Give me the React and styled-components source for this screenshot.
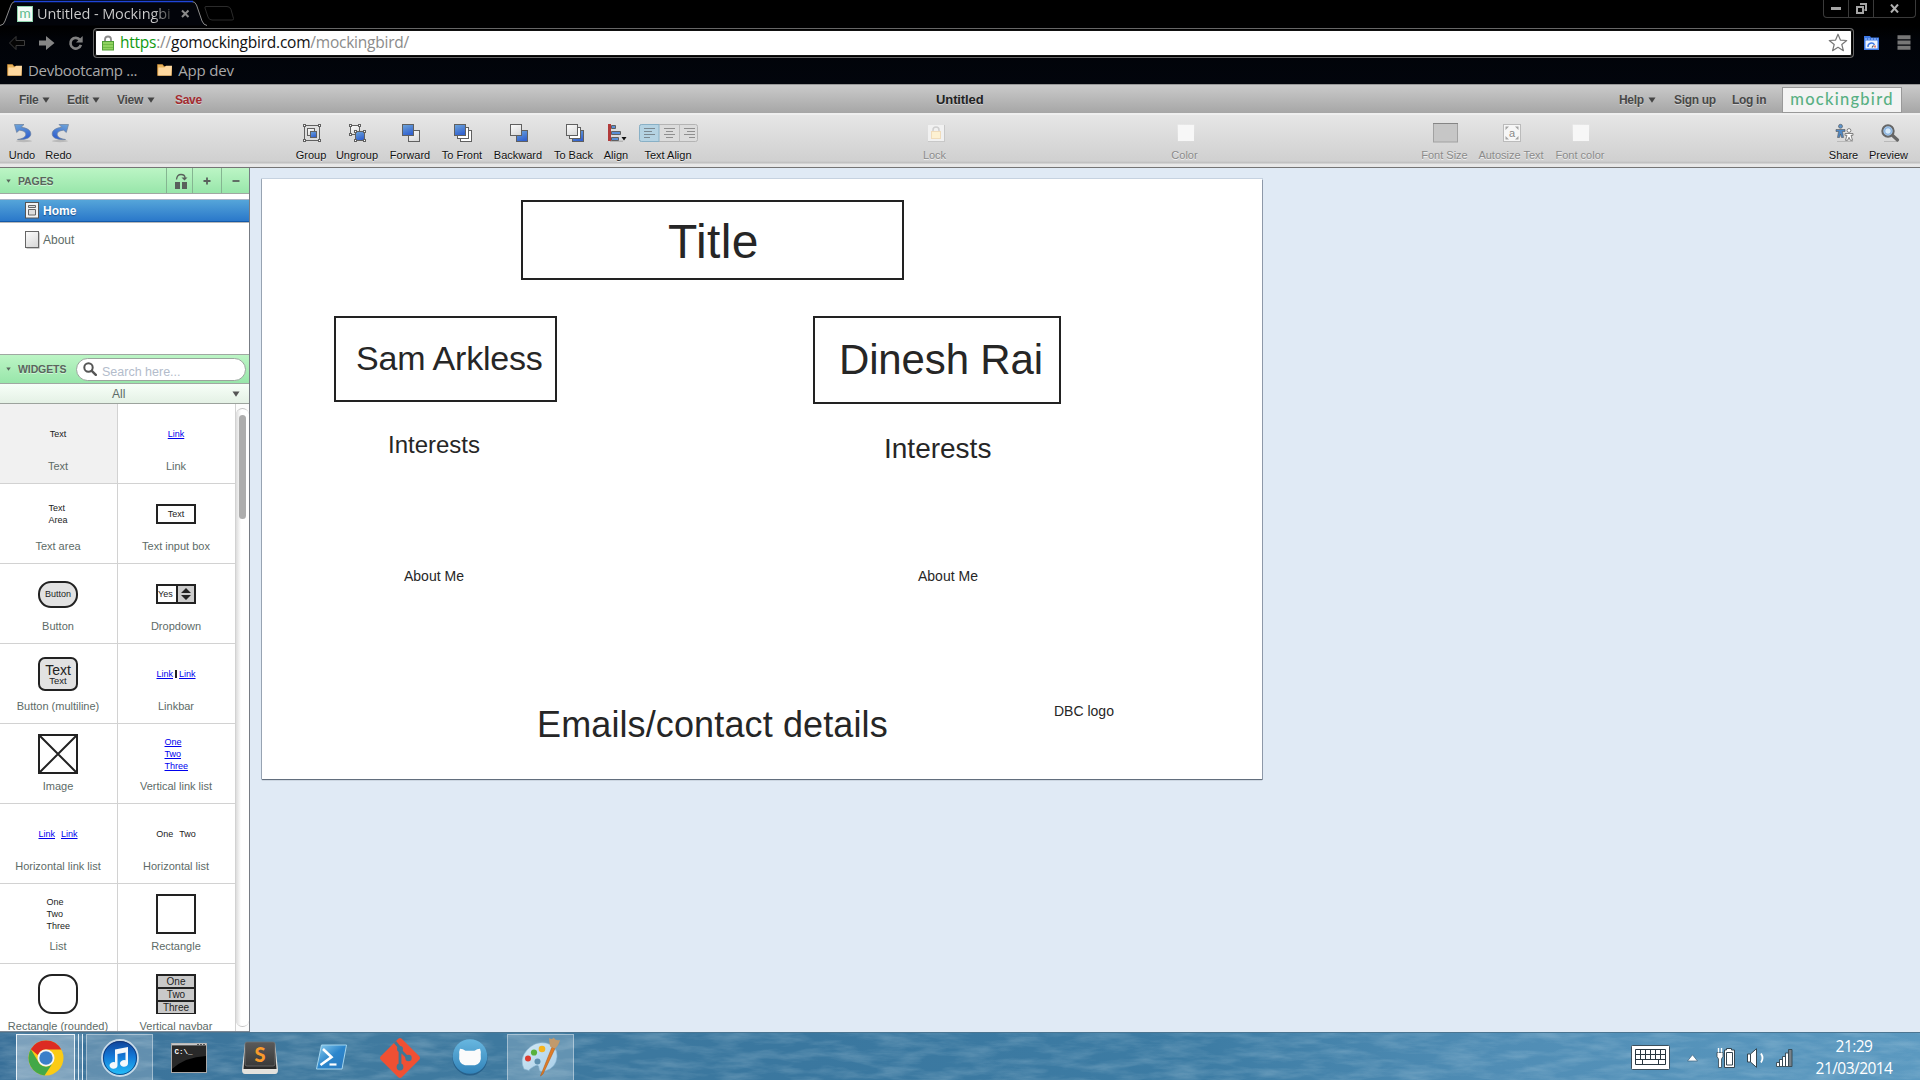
import React from 'react';
import styled, { createGlobalStyle, css } from 'styled-components';

const ARIAL = '"Liberation Sans", Arial, sans-serif';
const SEGOE = '"Open Sans", "Noto Sans", sans-serif';

const GlobalStyle = createGlobalStyle`
  *, *::before, *::after { box-sizing: border-box; }
  body { margin: 0; overflow: hidden; background: #e0eaf5; font-family: ${ARIAL}; }
  svg { display: block; flex: none; }
`;

const Screen = styled.div`
  width: 1920px;
  height: 1080px;
  display: flex;
  flex-direction: column;
  overflow: hidden;
`;

/* ---------- browser window ---------- */

const BrowserChrome = styled.header`
  height: 84px;
  flex: none;
  background: linear-gradient(#000 0, #000 26px, #010308 40px, #02050c 100%);
  font-family: ${SEGOE};
`;

const TabStrip = styled.div`
  height: 28px;
  display: flex;
  align-items: flex-start;
`;

const Tab = styled.div`
  position: relative;
  width: 204px;
  height: 28px;
  padding: 0 14px 0 17px;
  display: flex;
  align-items: center;
  gap: 4px;
`;

const TabOutline = styled.svg`
  position: absolute;
  left: 0;
  top: 0;
`;

const Favicon = styled.span`
  position: relative;
  width: 16px;
  height: 16px;
  background: #f4fbf7;
  border: 1px solid #8ed3ad;
  color: #5fbb8d;
  font: 14px/11px "Lato", sans-serif;
  display: flex;
  justify-content: center;
`;

const TabTitle = styled.span`
  position: relative;
  width: 140px;
  white-space: nowrap;
  font-size: 14.5px;
  line-height: 20px;
  letter-spacing: -0.1px;
  background: linear-gradient(90deg, #cfcfcf 116px, #222 137px);
  background-clip: text;
  color: transparent;
`;

const TabClose = styled.svg`
  position: relative;
`;

const WindowButtons = styled.div`
  margin-left: auto;
  margin-right: 4px;
  height: 18px;
  display: flex;
  border: 1px solid #3a3a3a;
  border-top: 0;
  border-radius: 0 0 4px 4px;
`;

const WindowButton = styled.div`
  width: ${(p) => p.$w}px;
  padding-bottom: 1px;
  display: flex;
  align-items: center;
  justify-content: center;
  & + & { border-left: 1px solid #3a3a3a; }
`;

const NavRow = styled.div`
  height: 29px;
  display: flex;
  align-items: center;
  padding: 0 8px;
`;

const NavIcons = styled.div`
  width: 86px;
  display: flex;
  align-items: center;
  gap: 12px;
`;

const Omnibox = styled.div`
  width: 1759px;
  height: 28px;
  padding: 0 4px 0 7px;
  display: flex;
  align-items: center;
  background: #fff;
  border: 1px solid #000;
  border-radius: 3px;
  box-shadow: inset 0 0 0 1px #111, 0 0 0 1px #666;
  background-clip: padding-box;
`;

const Url = styled.div`
  flex: 1;
  margin-left: 6px;
  padding-bottom: 1px;
  font-size: 15.5px;
  line-height: 22px;
  letter-spacing: -0.23px;
  color: #8b8b8b;
`;

const Scheme = styled.span`color: #119a11;`;
const Host = styled.span`color: #111;`;

const Extensions = styled.div`
  display: flex;
  align-items: center;
  margin-left: 11px;
  gap: 18px;
`;

const Bookmarks = styled.div`
  height: 26px;
  padding: 0 7px;
  display: flex;
  align-items: center;
  gap: 20px;
`;

const Bookmark = styled.div`
  display: flex;
  align-items: center;
  gap: 5px;
  color: #a9a9a9;
  font-size: 15px;
  line-height: 20px;
  letter-spacing: ${(p) => p.$ls}px;
`;

/* ---------- menu bar ---------- */

const MenuBar = styled.nav`
  height: 29px;
  flex: none;
  display: flex;
  align-items: center;
  padding: 1px 18px 0 19px;
  border-top: 1px solid #979797;
  background: linear-gradient(#cacaca, #a6a6a6);
  font-size: 12px;
  font-weight: bold;
  letter-spacing: -0.3px;
  color: #484848;
  text-shadow: 0 1px 0 rgba(255, 255, 255, 0.45);
`;

const MenuItem = styled.div`
  width: ${(p) => p.$w}px;
  display: flex;
  align-items: center;
  gap: 4px;
  white-space: nowrap;
  ${(p) => p.$alert && css`color: #a32b30;`}
`;

const DocTitle = styled.div`
  flex: 1;
  font-size: 13px;
  letter-spacing: -0.1px;
  color: #222;
  padding-left: 721px;
`;

const Brand = styled.div`
  width: 120px;
  height: 26px;
  background: #f3f3f3;
  border: 1px solid #999;
  color: #58b083;
  font: 500 16.5px/22px "Lato", sans-serif;
  letter-spacing: 1.25px;
  text-align: center;
  text-shadow: none;
`;

/* ---------- tool bar ---------- */

const ToolBar = styled.div`
  height: 55px;
  flex: none;
  display: flex;
  padding: 10px 5px 0 4px;
  border-top: 2px solid #efefef;
  border-bottom: 1px solid #757575;
  background: linear-gradient(#e6e6e6, #d0d0d0 46px, #bdbdbd 48px, #e9e9e9 49px, #e6e6e6);
`;

const ToolGroup = styled.div`
  display: flex;
  margin-left: ${(p) => p.$gap || 0}px;
`;

const Tool = styled.div`
  width: ${(p) => p.$w}px;
  display: flex;
  flex-direction: column;
  align-items: center;
  font-size: 11px;
  line-height: 12px;
  color: #111;
  white-space: nowrap;
  text-shadow: 0 1px 0 rgba(255, 255, 255, 0.7);
  ${(p) => p.$off && css`color: #8a8a8a;`}
`;

const ToolArt = styled.div`
  height: 24px;
  display: flex;
  align-items: flex-start;
  padding-left: 2px;
  margin-top: -2px;
  margin-bottom: 2px;
`;

/* ---------- workspace ---------- */

const Workspace = styled.main`
  height: 864px;
  flex: none;
  display: flex;
`;

const SideBar = styled.aside`
  width: 250px;
  flex: none;
  display: flex;
  flex-direction: column;
  background: #fff;
  border-right: 1px solid #777c84;
`;

const PanelHead = styled.div`
  height: ${(p) => p.$h}px;
  flex: none;
  display: flex;
  align-items: center;
  border-bottom: 1px solid #a0a8a2;
  background: linear-gradient(#bcf5c5, #98e6aa);
  color: #59655c;
  font-size: 10.5px;
  font-weight: bold;
  padding-left: 6px;
  text-shadow: 0 1px 0 rgba(255, 255, 255, 0.5);
  ${(p) => p.$line && css`border-top: 1px solid #a0a8a2;`}
`;

const PanelTitle = styled.span`
  flex: 1;
  margin-left: 7px;
  letter-spacing: -0.1px;
`;

const HeadButton = styled.div`
  width: ${(p) => p.$w}px;
  height: 100%;
  padding-left: ${(p) => p.$pl || 0}px;
  display: flex;
  align-items: center;
  justify-content: center;
  border-left: 1px solid #85b591;
`;

const PageList = styled.div`
  height: 160px;
  flex: none;
  padding-top: 5px;
`;

const PageItem = styled.div`
  height: ${(p) => (p.$on ? 23 : 36)}px;
  padding-left: 25px;
  display: flex;
  align-items: center;
  gap: 3px;
  font-size: 12px;
  color: #5d6b67;
  ${(p) => p.$on && css`
    color: #fff;
    font-weight: bold;
    border-top: 1px solid #a8b4c8;
    border-bottom: 1px solid #1259a8;
    box-shadow: 0 1px 0 #b9b9b9;
    background: linear-gradient(#55a5d9, #2a78ca);
    text-shadow: 0 1px 1px rgba(0, 30, 80, 0.5);
  `}
`;

const Search = styled.div`
  width: 170px;
  height: 23px;
  margin-right: 3px;
  padding-left: 6px;
  display: flex;
  align-items: center;
  gap: 5px;
  background: #fff;
  border: 1px solid #9aa59d;
  border-radius: 12px;
  color: #b3bccb;
  font-weight: normal;
  font-size: 12.5px;
  text-shadow: none;
`;

const SearchHint = styled.span`padding-top: 5px;`;

const Filter = styled.div`
  height: 20px;
  flex: none;
  display: flex;
  align-items: center;
  padding: 1px 9px 0 112px;
  justify-content: space-between;
  font-size: 12px;
  color: #5d6b67;
  background: linear-gradient(#f7fff8, #e4f1e5);
  border-bottom: 1px solid #9ca39d;
`;

const WidgetArea = styled.div`
  height: 628px;
  flex: none;
  display: flex;
  overflow: hidden;
  border-bottom: 1px solid #7d8894;
`;

const WidgetGrid = styled.div`
  width: 236px;
  flex: none;
  display: grid;
  grid-template-columns: 118px 118px;
  grid-auto-rows: 80px;
`;

const Cell = styled.div`
  display: flex;
  flex-direction: column;
  padding-right: 1px;
  border-right: 1px solid #d2d2d2;
  border-bottom: 1px solid #d2d2d2;
  background: ${(p) => (p.$on ? '#f1f1f1' : '#fff')};
`;

const CellArt = styled.div`
  height: 55px;
  padding-top: 5px;
  display: flex;
  align-items: center;
  justify-content: center;
  font-size: 9px;
  line-height: 12px;
  color: #222;
`;

const CellLabel = styled.div`
  font-size: 11px;
  line-height: 14px;
  text-align: center;
  color: #5d6b67;
  white-space: nowrap;
`;

const MiniLink = styled.span`
  color: #0000ee;
  text-decoration: underline;
`;

const MiniColumn = styled.div`
  display: flex;
  flex-direction: column;
  width: ${(p) => p.$w || 19}px;
  white-space: nowrap;
`;

const MiniRow = styled.div`
  display: flex;
  gap: ${(p) => p.$gap}px;
`;

const MiniSep = styled.i`
  width: 2px;
  height: 8px;
  margin-top: 2px;
  background: #222;
`;

const MiniBox = styled.div`
  width: 40px;
  height: ${(p) => p.$h}px;
  display: flex;
  flex-direction: column;
  align-items: center;
  justify-content: center;
  border: 2px solid #222;
  border-radius: ${(p) => p.$r || 0}px;
  background: ${(p) => p.$bg || '#fff'};
`;

const BigLine = styled.span`font-size: 14px; line-height: 13px;`;
const SmallLine = styled.span`font-size: 9.5px; line-height: 8px;`;

const MiniSelect = styled.div`
  width: 40px;
  height: 20px;
  display: flex;
  border: 2px solid #222;
  line-height: 16px;
`;
const MiniValue = styled.div`width: 18px;`;
const MiniSpin = styled.div`
  flex: 1;
  display: flex;
  align-items: center;
  justify-content: center;
  background: #ccc;
  border-left: 2px solid #222;
`;

const MiniNav = styled.div`
  width: 40px;
  height: 40px;
  display: grid;
  grid-template-rows: repeat(3, 1fr);
  gap: 2px;
  padding: 2px;
  background: #222;
  font-size: 10px;
  line-height: 11px;
  text-align: center;
`;
const MiniNavItem = styled.div`background: #c9c9c9; height: 11px;`;

const Scroller = styled.div`
  flex: 1;
  padding: 4px 0 4px;
  display: flex;
  background: #fcfcfc;
`;
const ScrollTrack = styled.div`
  flex: 1;
  border: 1px solid #c3c3c3;
  border-left: 0;
  border-right: 0;
  border-radius: 7px;
  background: linear-gradient(90deg, #dcdcdc, #fff 5px);
  padding: 6px 3px;
`;
const ScrollThumb = styled.div`
  width: 7px;
  height: 104px;
  border-radius: 4px;
  background: #adadad;
`;

const Stage = styled.section`
  flex: 1;
  background: #e0eaf5;
  padding: 11px 0 0 12px;
`;

const Sheet = styled.div`
  position: relative;
  width: 1000px;
  height: 600px;
  background: #fff;
  box-shadow: 0 0 0 1px rgba(95, 115, 140, 0.2), -1px 0 0 rgba(95, 105, 120, 0.35), 1px 1px 0 rgba(90, 100, 115, 0.45), 0 1px 1px #6b7580;
`;

/* x is the left edge and y the baseline, both in sheet units */
const SheetText = styled.div`
  position: absolute;
  left: ${(p) => p.$x}px;
  top: ${(p) => Math.round(p.$y - p.$size * 0.8465)}px;
  font-size: ${(p) => p.$size}px;
  line-height: 1;
  letter-spacing: ${(p) => p.$ls || 0}px;
  white-space: nowrap;
  color: #262626;
`;

const SheetBox = styled.div`
  position: absolute;
  left: ${(p) => p.$x}px;
  top: ${(p) => p.$y}px;
  width: ${(p) => p.$w}px;
  height: ${(p) => p.$h}px;
  border: 2px solid #222;
`;

/* ---------- task bar ---------- */

const TaskBar = styled.footer`
  position: relative;
  height: 49px;
  flex: none;
  display: flex;
  align-items: stretch;
  padding: 1px 0 0 16px;
  border-top: 1px solid #4b7591;
  background: linear-gradient(90deg, #386f98 0, #407a9f 350px, #3a779f 800px, #3d7ca4 1200px, #508db5 1500px, #5b99c0 1920px);
`;

const Water = styled.svg`
  position: absolute;
  inset: 0;
  opacity: 0.2;
`;

const Task = styled.div`
  position: relative;
  width: ${(p) => p.$w}px;
  margin-right: ${(p) => p.$mr || 0}px;
  display: flex;
  align-items: center;
  justify-content: center;
  ${(p) => p.$open && css`
    border: 1px solid ${p.$front ? '#e9f2f8' : 'rgba(255,255,255,0.4)'};
    background: rgba(255, 255, 255, ${p.$front ? 0.34 : 0.2});
  `}
`;

const Stack = styled.div`
  position: relative;
  width: 4px;
  margin-right: ${(p) => p.$mr || 0}px;
  border-right: 1px solid #e3eef6;
  background: rgba(255, 255, 255, 0.1);
`;

const Tray = styled.div`
  position: relative;
  margin-left: auto;
  display: flex;
  align-items: center;
  padding-right: 27px;
`;

const TrayIcon = styled.div`
  margin-right: ${(p) => p.$mr}px;
`;

const Clock = styled.div`
  width: 78px;
  text-align: center;
  color: #fff;
  font: 400 15.5px/22px ${SEGOE};
  letter-spacing: -0.55px;
  white-space: nowrap;
  padding-bottom: 1px;
`;

/* ---------- icons ---------- */

const Caret = ({ w = 8, color = '#444' }) => (
  <svg width={w} height="6" viewBox="0 0 8 6"><path d="M0.5 0.5h7L4 5.8z" fill={color} /></svg>
);

const Folder = () => (
  <svg width="16" height="14" viewBox="0 0 16 14">
    <path d="M.5 12.5V1.5h5l1.5 2h7.5v9z" fill="#e9b45c" stroke="#c98a35" strokeWidth=".6" />
    <path d="M1.2 12.4L1.5 4.5h6L9 2.8h6l-.7 9.6z" fill="#ffd9a0" />
  </svg>
);

const DefsSvg = styled.svg`
  position: absolute;
`;

const Defs = () => (
  <DefsSvg width="0" height="0">
    <defs>
      <linearGradient id="blue" x1="0" y1="0" x2="0.4" y2="1">
        <stop offset="0" stopColor="#6fa6da" /><stop offset="1" stopColor="#3363cf" />
      </linearGradient>
      <linearGradient id="pale" x1="0" y1="0" x2="0.5" y2="1">
        <stop offset="0" stopColor="#fdfdfd" /><stop offset="1" stopColor="#dcdcdc" />
      </linearGradient>
      <linearGradient id="glass" x1="0" y1="0" x2="0" y2="1">
        <stop offset="0" stopColor="#0f3f95" /><stop offset=".45" stopColor="#1377d6" /><stop offset="1" stopColor="#25c3fb" />
      </linearGradient>
      <linearGradient id="key" x1="0" y1="0" x2="0" y2="1">
        <stop offset="0" stopColor="#5a5a5a" /><stop offset="1" stopColor="#393939" />
      </linearGradient>
      <linearGradient id="shell" x1="0" y1="0" x2="1" y2="1">
        <stop offset="0" stopColor="#8fd0f0" /><stop offset=".5" stopColor="#2c86cc" /><stop offset="1" stopColor="#2b78bd" />
      </linearGradient>
      <linearGradient id="disc" x1="0" y1="0" x2="0" y2="1">
        <stop offset="0" stopColor="#68b7e0" /><stop offset="1" stopColor="#3183b9" />
      </linearGradient>
      <linearGradient id="palette" x1="0" y1="0" x2="1" y2="1">
        <stop offset="0" stopColor="#d3e8f5" /><stop offset="1" stopColor="#a9cfe8" />
      </linearGradient>
    </defs>
  </DefsSvg>
);

const Sq = ({ x, y, s, fill }) => (
  <rect x={x} y={y} width={s} height={s} fill={fill} stroke="#606060" />
);
const Handles = ({ x, y, w, h }) => (
  <g fill="#fff" stroke="#606060">
    <path d={`M${x} ${y}h${w}v${h}h${-w}z`} fill="none" />
    {[[x, y], [x + w, y], [x, y + h], [x + w, y + h]].map(([a, b]) => (
      <rect key={`${a}-${b}`} x={a - 1} y={b - 1} width="2" height="2" />
    ))}
  </g>
);

const ARROW = 'M1.5 1.5h9.5L8.2 4.3C14.5 5 18 7.500 17.800 11.200 17.500 15 12.500 17 4.500 16.500c5-.7 8.300-2.500 8.300-5.300 0-2.200-2.300-3.600-6.500-4L3.700 9.500z';

const art = {
  undo: (
    <svg width="20" height="20" viewBox="0 0 20 20">
      <ellipse cx="11" cy="18" rx="8" ry="1.2" fill="#b9b9b9" />
      <path d={ARROW} fill="url(#blue)" stroke="#6b7f9b" strokeWidth=".7" />
    </svg>
  ),
  redo: (
    <svg width="20" height="20" viewBox="0 0 20 20">
      <ellipse cx="10" cy="18" rx="8" ry="1.2" fill="#b9b9b9" />
      <path transform="matrix(-1 0 0 1 20 0)" d={ARROW} fill="url(#blue)" stroke="#6b7f9b" strokeWidth=".7" />
    </svg>
  ),
  group: (
    <svg width="20" height="20" viewBox="0 0 20 20">
      <Handles x={2.5} y={2.5} w={15} h={15} />
      <Sq x={5.5} y={5.5} s={7} fill="url(#pale)" /><Sq x={8.5} y={8.5} s={6} fill="url(#blue)" />
    </svg>
  ),
  ungroup: (
    <svg width="20" height="20" viewBox="0 0 20 20">
      <Sq x={2.5} y={2.5} s={9} fill="url(#pale)" /><Handles x={2.5} y={2.5} w={9} h={9} />
      <Sq x={7.5} y={8.5} s={9} fill="url(#blue)" /><Handles x={7.5} y={8.5} w={9} h={9} />
    </svg>
  ),
  forward: (
    <svg width="20" height="20" viewBox="0 0 20 20">
      <Sq x={7.5} y={7.5} s={11} fill="url(#pale)" /><Sq x={1.5} y={1.5} s={11} fill="url(#blue)" />
    </svg>
  ),
  front: (
    <svg width="20" height="20" viewBox="0 0 20 20">
      <Sq x={7.5} y={7.5} s={11} fill="#fff" /><Sq x={4.5} y={4.5} s={11} fill="#fff" /><Sq x={1.5} y={1.5} s={11} fill="url(#blue)" />
    </svg>
  ),
  backward: (
    <svg width="20" height="20" viewBox="0 0 20 20">
      <Sq x={7.5} y={7.5} s={11} fill="url(#blue)" /><Sq x={1.5} y={1.5} s={11} fill="url(#pale)" />
    </svg>
  ),
  back: (
    <svg width="20" height="20" viewBox="0 0 20 20">
      <Sq x={7.5} y={7.5} s={11} fill="url(#blue)" /><Sq x={4.5} y={4.5} s={11} fill="#fff" /><Sq x={1.5} y={1.5} s={11} fill="url(#pale)" />
    </svg>
  ),
  align: (
    <svg width="20" height="20" viewBox="0 0 20 20">
      <rect x="3" y="17.5" width="13" height="1.5" fill="#b5b5b5" />
      <g fill="#5a8fd8" stroke="#606060"><path d="M4.5 2.5h4v3h-4zM4.5 8.5h9v3h-9zM4.5 14.5h7v3h-7z" /></g>
      <path d="M1 1h3v17H1z" fill="#b23a3a" />
      <path d="M14.5 14h5L17 17.5z" fill="#111" />
    </svg>
  ),
  textAlign: (
    <svg width="60" height="20" viewBox="0 0 60 20">
      <rect x=".5" y="1.5" width="58" height="17" rx="2" fill="#dcdcdc" stroke="#b4b4b4" />
      <path d="M2.5 1.5H20v17H2.5q-2 0-2-2v-13q0-2 2-2z" fill="#b5d3e3" stroke="#88b0c6" />
      <path d="M40.5 1.5v17" stroke="#bbb" />
      <path d="M5 5.5h11M5 8.5h8M5 11.5h11M5 14.5h6" stroke="#7b8890" />
      <path d="M25 5.5h11M27 8.5h7M25 11.5h11M27 14.5h7" stroke="#8f8f8f" />
      <path d="M45 5.5h11M48 8.5h8M45 11.5h11M50 14.5h6" stroke="#8f8f8f" />
    </svg>
  ),
  lock: (
    <svg width="20" height="20" viewBox="0 0 20 20">
      <rect x="2" y="2" width="17" height="17" fill="#c8c8c8" /><rect x="2" y="2" width="16" height="16" fill="#f1f1f1" />
      <path d="M7 9V7q0-3 3-3t3 3v2" fill="none" stroke="#cfcfcf" strokeWidth="1.500" />
      <rect x="5.5" y="8.5" width="9" height="7" fill="#fdf1d2" stroke="#f0dcbb" />
    </svg>
  ),
  color: (
    <svg width="20" height="20" viewBox="0 0 20 20"><rect x="1.5" y="1.5" width="17" height="17" fill="url(#pale)" opacity=".5" /><rect x="2" y="2" width="16" height="16" fill="#f7f7f7" /></svg>
  ),
  fontSize: (
    <svg width="26" height="20" viewBox="0 0 26 20"><rect x=".5" y=".5" width="24" height="18.5" fill="#c6c6c6" stroke="#a2a2a2" /><path d="M0 .5h25" stroke="#858585" /></svg>
  ),
  autosize: (
    <svg width="20" height="20" viewBox="0 0 20 20">
      <rect x="1.5" y="1.5" width="17" height="17" fill="#f6f6f6" stroke="#bbb" />
      <path d="M3.5 3.5h3.500l-3.500 3.500zM16.500 3.500v3.500L13 3.500zM3.500 16.500V13L7 16.500zM16.500 16.500H13l3.500-3.500z" fill="#a3a3a3" />
      <text x="10" y="13.5" textAnchor="middle" fontFamily="Liberation Sans" fontSize="11" fill="#888">a</text>
    </svg>
  ),
  share: (
    <svg width="20" height="20" viewBox="0 0 20 20">
      <path d="M2 18.5h16" stroke="#b9b9b9" />
      <circle cx="5.500" cy="3.300" r="2" fill="#5f95cc" stroke="#555" strokeWidth=".6" />
      <path d="M1 6.500h9v2H7.500L8.500 14.500h-2l-1-3.500-1 3.500h-2l1-6H1z" fill="#5088c4" stroke="#555" strokeWidth=".6" />
      <circle cx="14" cy="7.500" r="1.900" fill="#fff" stroke="#666" strokeWidth=".8" />
      <path d="M10 10.500h8v1.800H16l1.500 5h-2l-1.500-3-1.500 3h-2l1.500-5H10z" fill="#fff" stroke="#666" strokeWidth=".8" />
    </svg>
  ),
  preview: (
    <svg width="20" height="20" viewBox="0 0 20 20">
      <path d="M4 18.5h14" stroke="#b9b9b9" />
      <path d="M11.500 11.500l6 5.500" stroke="#666" strokeWidth="3.200" strokeLinecap="round" />
      <circle cx="8" cy="8" r="5.700" fill="#a8cdf1" stroke="#666" strokeWidth="2" />
      <circle cx="8" cy="8" r="3.300" fill="#d6eafa" stroke="#6c9bd0" strokeWidth=".8" />
    </svg>
  ),
};

const toolGroups = [
  { gap: 0, tools: [['undo', 'Undo', 36], ['redo', 'Redo', 37]] },
  { gap: 214, tools: [['group', 'Group', 40], ['ungroup', 'Ungroup', 52], ['forward', 'Forward', 54], ['front', 'To Front', 50], ['backward', 'Backward', 62], ['back', 'To Back', 49], ['align', 'Align', 36], ['textAlign', 'Text Align', 68]] },
  { gap: 212, off: true, tools: [['lock', 'Lock', 41]] },
  { gap: 209, off: true, tools: [['color', 'Color', 41]] },
  { gap: 210, off: true, tools: [['fontSize', 'Font Size', 59], ['autosize', 'Autosize Text', 74], ['color', 'Font color', 64]] },
  { gap: 213, tools: [['share', 'Share', 37], ['preview', 'Preview', 53]] },
];

const widgets = [
  ['Text', <span>Text</span>, true],
  ['Link', <MiniLink>Link</MiniLink>],
  ['Text area', <MiniColumn><span>Text</span><span>Area</span></MiniColumn>],
  ['Text input box', <MiniBox $h={20}>Text</MiniBox>],
  ['Button', <MiniBox $h={27} $r={13} $bg="#e2e2e2">Button</MiniBox>],
  ['Dropdown', (
    <MiniSelect>
      <MiniValue>Yes</MiniValue>
      <MiniSpin><svg width="10" height="12" viewBox="0 0 10 12"><path d="M0 5L5 0l5 5zM0 7l5 5 5-5z" fill="#222" /></svg></MiniSpin>
    </MiniSelect>
  )],
  ['Button (multiline)', <MiniBox $h={34} $r={7} $bg="#e2e2e2"><BigLine>Text</BigLine><SmallLine>Text</SmallLine></MiniBox>],
  ['Linkbar', <MiniRow $gap={2}><MiniLink>Link</MiniLink><MiniSep /><MiniLink>Link</MiniLink></MiniRow>],
  ['Image', (
    <svg width="40" height="40" viewBox="0 0 40 40"><path d="M1 1h38v38H1zM1 1l38 38M39 1L1 39" fill="none" stroke="#222" strokeWidth="2" /></svg>
  )],
  ['Vertical link list', <MiniColumn $w={23}><MiniLink>One</MiniLink><MiniLink>Two</MiniLink><MiniLink>Three</MiniLink></MiniColumn>],
  ['Horizontal link list', <MiniRow $gap={6}><MiniLink>Link</MiniLink><MiniLink>Link</MiniLink></MiniRow>],
  ['Horizontal list', <MiniRow $gap={6}><span>One</span><span>Two</span></MiniRow>],
  ['List', <MiniColumn $w={23}><span>One</span><span>Two</span><span>Three</span></MiniColumn>],
  ['Rectangle', <MiniBox $h={40} />],
  ['Rectangle (rounded)', <MiniBox $h={40} $r={14} />],
  ['Vertical navbar', <MiniNav><MiniNavItem>One</MiniNavItem><MiniNavItem>Two</MiniNavItem><MiniNavItem>Three</MiniNavItem></MiniNav>],
];

const Browser = () => (
  <BrowserChrome>
    <TabStrip>
      <Tab>
        <TabOutline width="240" height="28" viewBox="0 0 240 28">
          <path d="M0 25.5Q4 25 5 21L11 5Q12.5 1.5 15 1.5H192Q195 1.5 196.5 5L202 21Q203.5 25 207 25.5" fill="#02040a" stroke="#8d8d8d" />
          <path d="M14 1.5H193" stroke="#1f45d8" strokeWidth="1.5" />
          <path d="M206 6.5h21q3 0 4 3l2.500 9q.5 1.500-1.500 1.500h-20q-3 0-4-3l-3-9q-.5-1.500 1-1.500z" fill="none" stroke="#2b2b2b" />
        </TabOutline>
        <Favicon>m</Favicon>
        <TabTitle>Untitled - Mockingbi</TabTitle>
        <TabClose width="10" height="10" viewBox="0 0 10 10"><path d="M2 1.500l6.500 6.500M8.500 1.500L2 8" stroke="#8a8a8a" strokeWidth="2" /></TabClose>
      </Tab>
      <WindowButtons>
        <WindowButton $w={24}><svg width="10" height="4" viewBox="0 0 10 4"><path d="M0 2.500h10" stroke="#a5a5a5" strokeWidth="3" /></svg></WindowButton>
        <WindowButton $w={25}>
          <svg width="11" height="11" viewBox="0 0 11 11"><path d="M4 1h6v6H8.500M1 4h6v6H1z" fill="none" stroke="#a5a5a5" strokeWidth="2" /></svg>
        </WindowButton>
        <WindowButton $w={42}><svg width="9" height="9" viewBox="0 0 9 9"><path d="M1 .5l7 8M8 .5l-7 8" stroke="#b0b0b0" strokeWidth="2" /></svg></WindowButton>
      </WindowButtons>
    </TabStrip>
    <NavRow>
      <NavIcons>
        <svg width="18" height="16" viewBox="0 0 18 16"><path d="M8 1.500L1.500 8 8 14.500V10.500h8.500v-5H8z" fill="#050505" stroke="#3d3d3d" /></svg>
        <svg width="18" height="16" viewBox="0 0 18 16"><path d="M8 1l8.500 7L8 15v-4.500H1v-5h7z" fill="#858585" /></svg>
        <svg width="16" height="16" viewBox="0 0 18 16"><path d="M13.500 4.500A6 6 0 1 0 14.500 10" fill="none" stroke="#808080" strokeWidth="3" /><path d="M16.500 0v7.500H9z" fill="#808080" /></svg>
      </NavIcons>
      <Omnibox>
        <svg width="12" height="16" viewBox="0 0 12 16">
          <path d="M3 7V4.500q0-3 3-3t3 3V7" fill="none" stroke="#8a8a8a" strokeWidth="1.800" />
          <rect x=".5" y="6.500" width="11" height="8.500" fill="#8fd25f" stroke="#4e9d35" /><path d="M1 9.500h10M1 12.500h10" stroke="#6fbb45" />
        </svg>
        <Url><Scheme>https</Scheme>://<Host>gomockingbird.com</Host>/mockingbird/</Url>
        <svg width="20" height="19" viewBox="0 0 20 19"><path d="M10 1.200l2.400 5.900 6.300.4-4.900 4 1.600 6.200-5.400-3.400-5.400 3.400 1.600-6.200-4.900-4 6.300-.4z" fill="#fff" stroke="#777" strokeWidth="1.200" strokeLinejoin="round" /></svg>
      </Omnibox>
      <Extensions>
        <svg width="15" height="14" viewBox="0 0 15 14">
          <path d="M0 0h6l1 1.500h8V14H0z" fill="#3d78e6" /><path d="M1.500 4.500h12v8h-12z" fill="#eef4ff" />
          <path d="M1 3h13" stroke="#a9c8fa" strokeDasharray="2 1" />
          <path d="M4 11a3.500 3.500 0 0 1 6.500-2.200" fill="none" stroke="#3d78e6" strokeWidth="1.400" /><path d="M8 11.500l1.500-2" stroke="#555" strokeWidth="1.200" /><path d="M11 9.500v2" stroke="#e04a3a" strokeWidth="1.400" />
        </svg>
        <svg width="14" height="15" viewBox="0 0 14 15"><path d="M.5 2.200h13M.5 7.500h13M.5 12.800h13" stroke="#777" strokeWidth="4" /></svg>
      </Extensions>
    </NavRow>
    <Bookmarks>
      <Bookmark $ls={-0.3}><Folder />Devbootcamp ...</Bookmark>
      <Bookmark $ls={-0.15}><Folder />App dev</Bookmark>
    </Bookmarks>
  </BrowserChrome>
);

const PagesPanel = () => (
  <>
    <PanelHead $h={26}>
      <Caret w={5} color="#59655c" />
      <PanelTitle>PAGES</PanelTitle>
      <HeadButton $w={26} $pl={3}>
        <svg width="14" height="16" viewBox="0 0 14 16">
          <path d="M1 9h5v7H1zM8 9h5v7H8z" fill="#59605c" /><path d="M2.500 6.500Q3 1.500 7 1.500T11 5" fill="none" stroke="#59605c" strokeWidth="1.300" /><path d="M7.500 4.500h6l-3 3z" fill="#59605c" />
        </svg>
      </HeadButton>
      <HeadButton $w={29}><svg width="8" height="8" viewBox="0 0 8 8"><path d="M4 .5v7M.5 4h7" stroke="#59605c" strokeWidth="1.800" /></svg></HeadButton>
      <HeadButton $w={28}><svg width="8" height="8" viewBox="0 0 8 8"><path d="M.5 4h7" stroke="#59605c" strokeWidth="1.800" /></svg></HeadButton>
    </PanelHead>
    <PageList>
      <PageItem $on>
        <svg width="15" height="17" viewBox="0 0 15 17"><rect x=".5" y=".5" width="13" height="15.500" fill="#f2f2f2" stroke="#555" /><path d="M3.500 3.500h7v2h-7zM3.500 7.500h7v5.500h-7z" fill="#ddd" stroke="#666" /></svg>
        Home
      </PageItem>
      <PageItem>
        <svg width="15" height="18" viewBox="0 0 15 18"><rect x="1.500" y="1.500" width="13" height="16" fill="#999" /><rect x=".5" y=".5" width="13" height="16" fill="url(#pale)" stroke="#666" /></svg>
        About
      </PageItem>
    </PageList>
  </>
);

const WidgetsPanel = () => (
  <>
    <PanelHead $h={30} $line>
      <Caret w={5} color="#59655c" />
      <PanelTitle>WIDGETS</PanelTitle>
      <Search>
        <svg width="14" height="14" viewBox="0 0 14 14"><circle cx="5.500" cy="5.500" r="4.200" fill="none" stroke="#555" strokeWidth="2" /><path d="M8.800 8.800l4 4" stroke="#555" strokeWidth="2.400" strokeLinecap="round" /></svg>
        <SearchHint>Search here...</SearchHint>
      </Search>
    </PanelHead>
    <Filter>All<Caret color="#555" /></Filter>
    <WidgetArea>
      <WidgetGrid>
        {widgets.map(([label, preview, on]) => (
          <Cell key={label} $on={on}>
            <CellArt>{preview}</CellArt>
            <CellLabel>{label}</CellLabel>
          </Cell>
        ))}
      </WidgetGrid>
      <Scroller><ScrollTrack><ScrollThumb /></ScrollTrack></Scroller>
    </WidgetArea>
  </>
);

const Wireframe = () => (
  <Sheet>
    <SheetBox $x={259} $y={21} $w={383} $h={80} />
    <SheetText $x={406} $y={80} $size={48} $ls={0.4}>Title</SheetText>
    <SheetBox $x={72} $y={137} $w={223} $h={86} />
    <SheetText $x={94} $y={191} $size={34} $ls={-0.22}>Sam Arkless</SheetText>
    <SheetBox $x={551} $y={137} $w={248} $h={88} />
    <SheetText $x={577} $y={196} $size={42} $ls={-0.15}>Dinesh Rai</SheetText>
    <SheetText $x={126} $y={274} $size={24}>Interests</SheetText>
    <SheetText $x={622} $y={280} $size={28}>Interests</SheetText>
    <SheetText $x={142} $y={402} $size={14}>About Me</SheetText>
    <SheetText $x={656} $y={402} $size={14}>About Me</SheetText>
    <SheetText $x={275} $y={558} $size={36} $ls={0.12}>Emails/contact details</SheetText>
    <SheetText $x={792} $y={537} $size={14}>DBC logo</SheetText>
  </Sheet>
);

const Tasks = () => (
  <>
    <Task $w={59} $open $front>
      <svg width="36" height="36" viewBox="0 0 36 36">
        <circle cx="18" cy="18" r="17.500" fill="#fbcb15" />
        <path d="M2.800 9.300A17.500 17.500 0 0 1 33.300 9.500H18a8.500 8.500 0 0 0-8 5.700z" fill="#dc2b22" />
        <path d="M2.800 9.300A17.500 17.500 0 0 0 16.500 35.400L24.500 23.500a8.500 8.500 0 0 1-13.900-1.300z" fill="#43a848" />
        <circle cx="18" cy="18" r="8.500" fill="#f6f6f6" /><circle cx="18" cy="18" r="6.700" fill="#3b7fc9" />
      </svg>
    </Task>
    <Stack /><Stack $mr={3} />
    <Task $w={67} $open $mr={18}>
      <svg width="38" height="38" viewBox="0 0 38 38">
        <circle cx="19" cy="19" r="18" fill="url(#glass)" stroke="#c9d9e6" strokeWidth="1.800" />
        <circle cx="19" cy="19" r="16.500" fill="none" stroke="#12346f" strokeWidth=".8" />
        <path d="M14 10.500l13-2.500v16.500a4 3.400 0 1 1-2.500-3.200V13.500l-8 1.600v11.400a4 3.400 0 1 1-2.500-3.200z" fill="#f4f8fb" />
      </svg>
    </Task>
    <Task $w={36} $mr={34}>
      <svg width="36" height="30" viewBox="0 0 36 30">
        <rect x=".5" y=".5" width="35" height="29" fill="#000" stroke="#a9a9a9" /><path d="M1 1.500h34" stroke="#c9c9c9" strokeWidth="2" />
        <path d="M1 3h34v10Q14 14 1 26z" fill="#333" opacity=".8" />
        <path d="M26 1.500h8" stroke="#555" strokeDasharray="2 1" />
        <text x="3.500" y="11" fontFamily="Liberation Mono" fontSize="7.500" fontWeight="bold" fill="#fff">C:\_</text>
      </svg>
    </Task>
    <Task $w={38} $mr={36}>
      <svg width="38" height="38" viewBox="0 0 38 38">
        <path d="M4 4h30l3 27q0 4-3 4H4q-3 0-3-4z" fill="#e4e2dd" /><path d="M4.500 4h29l2 26h-33z" fill="#2a2a2a" />
        <rect x="4" y="3" width="30" height="24" rx="2" fill="url(#key)" stroke="#777" strokeWidth=".7" />
        <text x="19" y="22.500" textAnchor="middle" fontFamily="Lato" fontWeight="900" fontSize="20" fill="#f89a2b">S</text>
      </svg>
    </Task>
    <Task $w={33} $mr={32}>
      <svg width="33" height="28" viewBox="0 0 33 28">
        <path d="M6.500 1h25L27 25H1.500z" fill="url(#shell)" stroke="#a3d5ee" strokeLinejoin="round" />
        <path d="M8 5l8.500 8L5.500 21" fill="none" stroke="#fff" strokeWidth="2.600" /><path d="M14.500 20.500h7" stroke="#fff" strokeWidth="2.200" />
      </svg>
    </Task>
    <Task $w={40} $mr={32}>
      <svg width="40" height="42" viewBox="0 0 40 42">
        <path d="M18 2q2-2 4 0l17 17q2 2 0 4L22 40q-2 2-4 0L1 23q-2-2 0-4z" fill="#f05033" />
        <path d="M15 5l5 6v19M20 13l8 8" fill="none" stroke="#3f7796" strokeWidth="2.800" />
        <circle cx="20" cy="12" r="3" fill="#3f7796" /><circle cx="20" cy="30" r="3.400" fill="#3f7796" /><circle cx="28.500" cy="21" r="3.200" fill="#3f7796" />
      </svg>
    </Task>
    <Task $w={36} $mr={19}>
      <svg width="36" height="38" viewBox="0 0 36 38">
        <circle cx="18" cy="19" r="17.500" fill="#27608a" /><circle cx="18" cy="17.500" r="17.300" fill="url(#disc)" />
        <path d="M8 9.700q3 0 5.500 2h9q2.500-2 5.500-2 1.200 3 .7 5.500 1.300 9.500-5.700 11H13Q6 24.700 7.300 15.200 6.800 12.700 8 9.700z" fill="#fbfbfb" />
      </svg>
    </Task>
    <Task $w={67} $open>
      <svg width="40" height="42" viewBox="0 0 40 42">
        <path d="M3 32Q-2 22 6 13T25 6q12 3 11 14T24 34q-6 2-6-3t-6-1-4 4-5-2z" fill="url(#palette)" stroke="#86b4d1" strokeWidth=".6" />
        <circle cx="16.500" cy="24.500" r="3" fill="#5d8fae" />
        <circle cx="7" cy="21.500" r="3" fill="#dd3b30" /><circle cx="13" cy="15.500" r="3.100" fill="#58b13c" /><circle cx="21" cy="12" r="3.300" fill="#f4b41e" />
        <path d="M19.500 39L31 10l3 1.500L22 37z" fill="#e07c25" stroke="#a85514" strokeWidth=".5" />
        <path d="M29 9.500L28 1q3 2 5-.5 1 3.500 6 2.500-1 5-5 8.500z" fill="#c29a6c" />
      </svg>
    </Task>
  </>
);

const SystemTray = () => (
  <Tray>
    <TrayIcon $mr={17}>
      <svg width="39" height="25" viewBox="0 0 39 25">
        <rect x=".5" y=".5" width="38" height="24" rx="1" fill="#fff" stroke="#3b4f5c" />
        <path d="M4.500 4.500h30v15h-30zM4.500 9.500h30M4.500 14.500h30M9.500 4.500v10M14.500 4.500v10M19.500 4.500v10M24.500 4.500v10M29.500 4.500v10M11.500 14.500v5M27.500 14.500v5" fill="none" stroke="#28363f" />
      </svg>
    </TrayIcon>
    <TrayIcon $mr={18}><svg width="11" height="8" viewBox="0 0 11 8"><path d="M.5 7L5.500 .8 10.500 7z" fill="#fff" stroke="#3b5f78" strokeWidth=".7" /></svg></TrayIcon>
    <TrayIcon $mr={11}>
      <svg width="20" height="22" viewBox="0 0 20 22">
        <path d="M8.500 3h2V1.500h5V3h3v17.500h-10z" fill="#fff" stroke="#34454f" /><path d="M10.500 5.500h6v12.500h-6z" fill="#fff" stroke="#34454f" />
        <path d="M1 5.500h6v4L5.500 12v8.500h-3V12L1 9.500z" fill="#fff" stroke="#34454f" strokeWidth=".8" /><path d="M2.500 1v4.500M5.500 1v4.500" stroke="#fff" strokeWidth="1.400" />
      </svg>
    </TrayIcon>
    <TrayIcon $mr={11}>
      <svg width="18" height="20" viewBox="0 0 18 20">
        <path d="M.5 6h3L9.500 .7v18.600L3.500 14h-3z" fill="#fff" stroke="#34454f" /><path d="M3.500 6v8" stroke="#34454f" />
        <path d="M14 5.500q3 4.500 0 9" fill="none" stroke="#fff" strokeWidth="1.800" />
      </svg>
    </TrayIcon>
    <TrayIcon $mr={22}>
      <svg width="17" height="18" viewBox="0 0 17 18">
        <g fill="#fff" stroke="#34454f" strokeWidth=".9"><path d="M.5 13.500h3v4h-3zM3.500 10.500h3v7h-3zM6.500 7.500h3v10h-3zM9.500 4h3v13.500h-3z" /><path d="M12.500 .5h3.500v17h-3.500z" fill="#77828a" /></g>
      </svg>
    </TrayIcon>
    <Clock>21:29<br />21/03/2014</Clock>
  </Tray>
);

export default function App() {
  return (
    <Screen>
      <GlobalStyle />
      <Defs />
      <Browser />
      <MenuBar>
        <MenuItem $w={48}>File<Caret /></MenuItem>
        <MenuItem $w={50}>Edit<Caret /></MenuItem>
        <MenuItem $w={58}>View<Caret /></MenuItem>
        <MenuItem $w={40} $alert>Save</MenuItem>
        <DocTitle>Untitled</DocTitle>
        <MenuItem $w={55}>Help<Caret /></MenuItem>
        <MenuItem $w={58}>Sign up</MenuItem>
        <MenuItem $w={50}>Log in</MenuItem>
        <Brand>mockingbird</Brand>
      </MenuBar>
      <ToolBar>
        {toolGroups.map((g, i) => (
          <ToolGroup key={i} $gap={g.gap}>
            {g.tools.map(([icon, label, w]) => (
              <Tool key={label} $w={w} $off={g.off}>
                <ToolArt>{art[icon]}</ToolArt>
                {label}
              </Tool>
            ))}
          </ToolGroup>
        ))}
      </ToolBar>
      <Workspace>
        <SideBar>
          <PagesPanel />
          <WidgetsPanel />
        </SideBar>
        <Stage><Wireframe /></Stage>
      </Workspace>
      <TaskBar>
        <Water width="1920" height="48">
          <filter id="ripple" x="0" y="0" width="100%" height="100%">
            <feTurbulence type="fractalNoise" baseFrequency="0.025 0.11" numOctaves="4" seed="7" />
            <feColorMatrix values="0 0 0 0 .75  0 0 0 0 .87  0 0 0 0 .92  2.2 0 0 0 -.85" />
          </filter>
          <rect width="1920" height="48" filter="url(#ripple)" />
        </Water>
        <Tasks />
        <SystemTray />
      </TaskBar>
    </Screen>
  );
}
